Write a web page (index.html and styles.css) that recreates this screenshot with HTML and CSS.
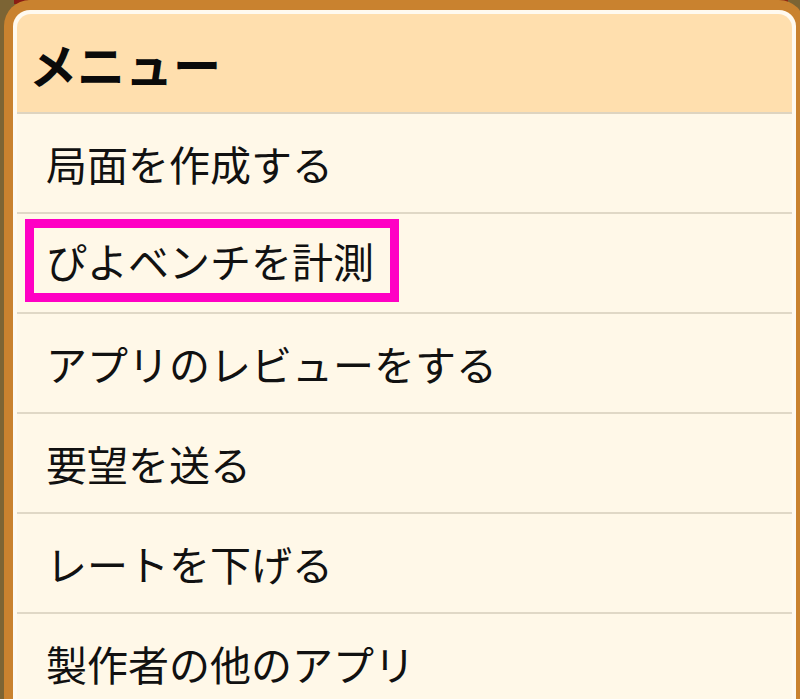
FILE: index.html
```html
<!DOCTYPE html>
<html lang="ja">
<head>
<meta charset="utf-8">
<title>メニュー</title>
<link rel="stylesheet" href="styles.css">
</head>
<body>
<div class="backdrop">
  <div class="bar bar-left"></div>
  <div class="bar bar-right"></div>
</div>
<div class="dialog">
  <div class="inner">
    <div class="header">メニュー</div>
    <ul class="menu">
      <li class="item">局面を作成する</li>
      <li class="item"><span class="mark">ぴよベンチを計測</span></li>
      <li class="item">アプリのレビューをする</li>
      <li class="item">要望を送る</li>
      <li class="item">レートを下げる</li>
      <li class="item">製作者の他のアプリ</li>
    </ul>
  </div>
</div>
</body>
</html>
```
FILE: styles.css
```css
html, body {
  margin: 0;
  padding: 0;
}
body {
  width: 800px;
  height: 699px;
  overflow: hidden;
  background: #7c6434;
  font-family: "Noto Sans CJK JP", "Noto Sans", sans-serif;
  position: relative;
}
.backdrop {
  position: absolute;
  left: 0;
  top: 0;
  width: 800px;
  height: 6px;
}
.bar {
  position: absolute;
  top: 0;
  height: 4px;
  background: #8a1e14;
}
.bar-left { left: 14px; width: 14px; }
.bar-right { left: 696px; width: 92px; background: #8c2a16; }
.dialog {
  position: relative;
  margin-left: 4px;
  width: 775px;
  border: 9px solid #c9822f;
  border-top-width: 10px;
  border-bottom: 0;
  border-radius: 26px 26px 0 0;
  background: #fffaf0;
  padding: 4px 4px 0 4px;
}
.inner {
  height: 685px;
  background: #fff8e8;
  border-radius: 14px 14px 0 0;
  overflow: hidden;
}
.header {
  height: 98px;
  background: #ffdfae;
  border-bottom: 2px solid #ded4c0;
  display: flex;
  align-items: center;
  padding-left: 12px;
  font-size: 48px;
  font-weight: 700;
  color: #0a0a0a;
  line-height: 1;
}
.menu {
  list-style: none;
  margin: 0;
  padding: 0;
}
.item {
  height: 98px;
  border-bottom: 2px solid #e0d8c6;
  display: flex;
  align-items: center;
  padding-left: 29px;
  font-size: 41px;
  color: #111;
  line-height: 1;
}
.mark {
  margin-left: -21px;
  padding: 12px 16px 12px 12px;
  border: 9px solid #ff00c4;
  margin-top: -6px;
}
```
